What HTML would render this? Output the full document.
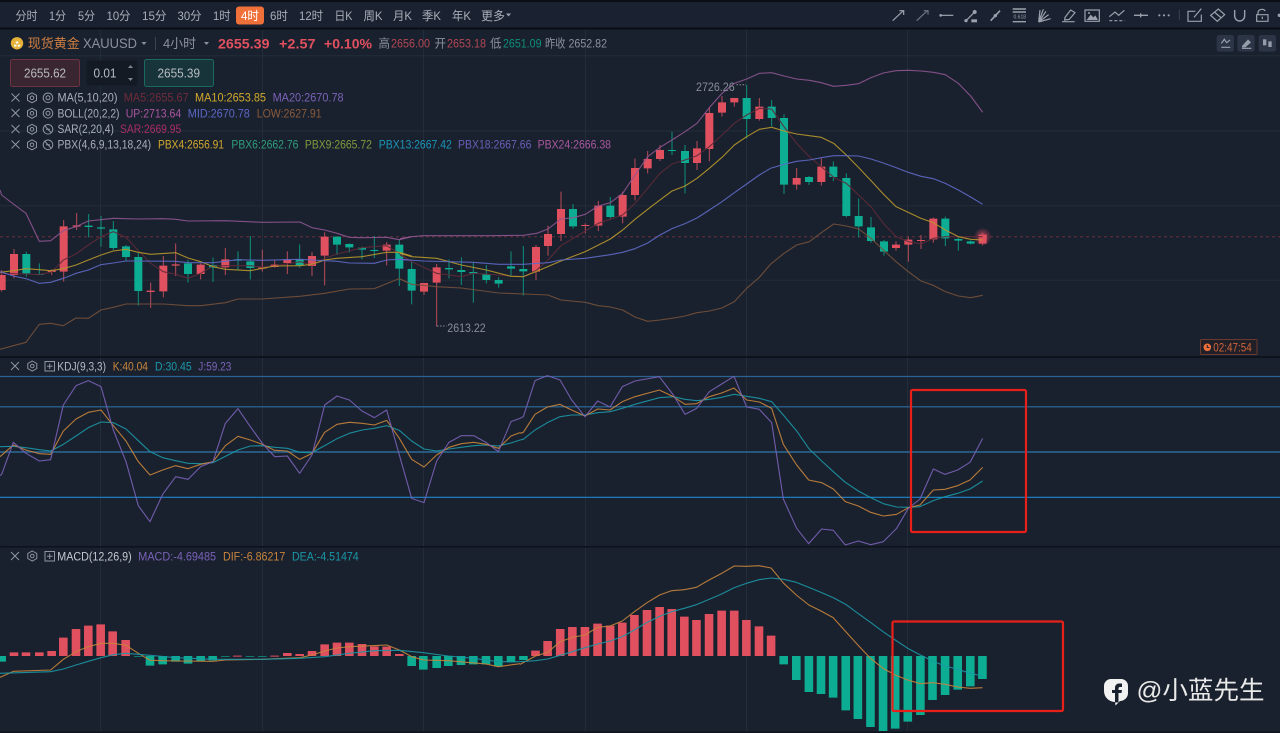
<!DOCTYPE html>
<html lang="zh"><head><meta charset="utf-8"><title>XAUUSD</title>
<style>
html,body{margin:0;padding:0;background:#1a212e;width:1280px;height:733px;overflow:hidden}
svg{display:block;font-family:"Liberation Sans","Noto Sans CJK SC",sans-serif;font-size:12px;filter:blur(.3px)}
.z *{vector-effect:non-scaling-stroke}
.l{fill:none;stroke-linejoin:round;stroke-width:1.1;opacity:.9}
.w{fill:none;stroke-width:1}
.b{fill:none;stroke-width:8}
.m{fill:none;stroke-width:8.6}
.i{fill:none;stroke:#9aa1ad;stroke-width:1.2}
.h{fill:none;stroke:#8f96a2;stroke-width:1}
text{white-space:pre}
.t text{fill:#a9afb9;font-size:12px}
</style></head><body>
<svg width="1280" height="733" viewBox="0 0 1280 733" xmlns="http://www.w3.org/2000/svg">
<defs><radialGradient id="gl"><stop offset="0" stop-color="#f0506a" stop-opacity=".75"/><stop offset="1" stop-color="#f0506a" stop-opacity="0"/></radialGradient></defs>
<rect width="1280" height="733" fill="#1a212e"/>

<!-- grid -->
<path d="M0 55.7H1280M0 131H1280M0 205.7H1280M0 280.3H1280" stroke="#222d39" stroke-width="1"/>
<path d="M100.5 30V356M262.5 30V356M423.5 30V356M585.5 30V356M746.5 30V356M907.5 30V356M100.5 358V546M262.5 358V546M423.5 358V546M585.5 358V546M746.5 358V546M907.5 358V546M100.5 548V731M262.5 548V731M423.5 548V731M585.5 548V731M746.5 548V731M907.5 548V731" stroke="#222d39" stroke-width="1"/>

<!-- top toolbar -->
<rect width="1280" height="2" fill="#0b0e14"/>
<rect y="2" width="1280" height="25.5" fill="#1a2231"/>
<rect y="27.5" width="1280" height="2" fill="#0a0d13"/>
<rect x="236" y="6.5" width="28" height="18" rx="3" fill="#f0703a"/>
<g class="t">
<text x="15.5" y="20" textLength="22" lengthAdjust="spacingAndGlyphs">分时</text>
<text x="49" y="20" textLength="17" lengthAdjust="spacingAndGlyphs">1分</text>
<text x="78" y="20" textLength="17" lengthAdjust="spacingAndGlyphs">5分</text>
<text x="106.5" y="20" textLength="24" lengthAdjust="spacingAndGlyphs">10分</text>
<text x="142" y="20" textLength="24.5" lengthAdjust="spacingAndGlyphs">15分</text>
<text x="177.5" y="20" textLength="24" lengthAdjust="spacingAndGlyphs">30分</text>
<text x="213" y="20" textLength="17.5" lengthAdjust="spacingAndGlyphs">1时</text>
<text x="241" y="20" textLength="18" lengthAdjust="spacingAndGlyphs" style="fill:#fff">4时</text>
<text x="270" y="20" textLength="18" lengthAdjust="spacingAndGlyphs">6时</text>
<text x="299" y="20" textLength="24" lengthAdjust="spacingAndGlyphs">12时</text>
<text x="334.5" y="20" textLength="18" lengthAdjust="spacingAndGlyphs">日K</text>
<text x="363.5" y="20" textLength="19" lengthAdjust="spacingAndGlyphs">周K</text>
<text x="393" y="20" textLength="19" lengthAdjust="spacingAndGlyphs">月K</text>
<text x="422" y="20" textLength="19" lengthAdjust="spacingAndGlyphs">季K</text>
<text x="452" y="20" textLength="19" lengthAdjust="spacingAndGlyphs">年K</text>
<text x="481" y="20" textLength="24" lengthAdjust="spacingAndGlyphs">更多</text>
</g>
<path d="M506 13.5h5l-2.500 3z" fill="#9aa1ad"/>

<!-- drawing tool icons -->
<g class="z" transform="translate(880,0) scale(.33333)">
<path class="i" d="M38 62L70 32M58 32H71V45"/>
<path class="i" style="stroke:#6d7583" d="M110 62L142 32M131 32H144V44"/>
<path class="i" d="M180 46H220"/><circle cx="182" cy="46" r="4" fill="#9aa1ad"/>
<path class="i" d="M258 62L286 34"/><circle cx="258" cy="62" r="5" fill="#9aa1ad"/><circle cx="284" cy="36" r="6" fill="#9aa1ad"/><rect x="274" y="58" width="17" height="9" fill="#9aa1ad"/>
<path class="i" style="stroke-width:1.6" d="M332 62L360 32"/><circle cx="346" cy="47" r="5" fill="#9aa1ad"/>
<path class="i" style="stroke-width:1.4" d="M398 27H438M398 36H438M398 65H438"/>
<path class="i" d="M476 66L490 28M476 66L498 34M476 66L506 44M476 66L512 56M476 66L480 30"/>
<path class="i" d="M555 52L572 30L585 38L568 58L554 60ZM546 65H584"/>
<rect x="615" y="30" width="43" height="34" class="i"/><path d="M620 60L632 44L640 52L646 46L654 60Z" fill="#9aa1ad"/><circle cx="627" cy="39" r="3" fill="#9aa1ad"/>
<path class="i" d="M688 50L705 36L716 46L733 31"/><path class="i" style="stroke-dasharray:3 2" d="M688 62H734"/>
<path class="i" style="stroke-width:1.4" d="M762 46H804M782 40V52"/>
<circle cx="838" cy="46" r="3.200" fill="#9aa1ad"/><circle cx="852" cy="46" r="3.200" fill="#9aa1ad"/><circle cx="866" cy="46" r="3.200" fill="#9aa1ad"/>
<path d="M898 30V60" style="stroke:#3a4352;stroke-width:1;fill:none"/>
<path class="i" d="M946 34H924V64H964V44M942 52L964 26"/>
<path class="i" d="M992 46L1015 27L1034 44L1012 64ZM1003 36L1024 54"/>
<path class="i" style="stroke-width:1.4" d="M1064 30V48A15 15 0 0 0 1094 48V30"/>
<rect x="1130" y="44" width="34" height="20" class="i"/><path class="i" d="M1134 44V38A12 11 0 0 1 1156 33M1147 50V57"/>
<circle cx="1198" cy="46" r="5" fill="#9aa1ad"/>
</g>
<text x="1013.500" y="18.300" font-size="5" fill="#9aa1ad" textLength="12.500" lengthAdjust="spacingAndGlyphs">0.618</text>

<!-- info row -->
<circle cx="17" cy="43.300" r="6.200" fill="#e6b23a"/>
<path d="M14 46.500h2.500v-1.800H14zM17.700 46.500h2.500v-1.800h-2.500zM15.800 43.500h2.500v-2h-2.500z" fill="#fff"/>
<text x="27.800" y="48" font-size="13" fill="#cf7f42" textLength="52" lengthAdjust="spacingAndGlyphs">现货黄金</text>
<text x="83" y="48" font-size="13.500" fill="#8b919c" textLength="54" lengthAdjust="spacingAndGlyphs">XAUUSD</text>
<path d="M141.500 42h5l-2.500 3z" fill="#8b919c"/>
<path d="M155.500 37V50" stroke="#3a4352"/>
<text x="163" y="48" font-size="13" fill="#8b919c" textLength="33" lengthAdjust="spacingAndGlyphs">4小时</text>
<path d="M204 42h5l-2.500 3z" fill="#8b919c"/>
<g font-weight="700" font-size="14" fill="#e0505f">
<text x="218" y="48.500" textLength="51.500" lengthAdjust="spacingAndGlyphs">2655.39</text>
<text x="279" y="48.500" textLength="36.500" lengthAdjust="spacingAndGlyphs">+2.57</text>
<text x="324" y="48.500" textLength="48" lengthAdjust="spacingAndGlyphs">+0.10%</text>
</g>
<g font-size="12" fill="#8b919c">
<text x="378.500" y="47.700" textLength="11.500" lengthAdjust="spacingAndGlyphs">高</text>
<text x="391" y="47.700" textLength="39" lengthAdjust="spacingAndGlyphs" fill="#b34755">2656.00</text>
<text x="434.500" y="47.700" textLength="11.500" lengthAdjust="spacingAndGlyphs">开</text>
<text x="447" y="47.700" textLength="39" lengthAdjust="spacingAndGlyphs" fill="#b34755">2653.18</text>
<text x="490" y="47.700" textLength="11.500" lengthAdjust="spacingAndGlyphs">低</text>
<text x="503" y="47.700" textLength="38.500" lengthAdjust="spacingAndGlyphs" fill="#0e8f7a">2651.09</text>
<text x="545" y="47.700" textLength="20.500" lengthAdjust="spacingAndGlyphs">昨收</text>
<text x="568.500" y="47.700" textLength="38.500" lengthAdjust="spacingAndGlyphs">2652.82</text>
</g>

<!-- right mini buttons -->
<g transform="translate(880,0) scale(.33333)" class="z">
<rect x="1010" y="105" width="52" height="50" rx="7" fill="#2b3546"/>
<rect x="1072" y="105" width="52" height="50" rx="7" fill="#2b3546"/>
<rect x="1136" y="105" width="52" height="50" rx="7" fill="#2b3546"/>
<path class="i" d="M1024 130L1033 118L1040 128L1050 120M1024 142H1051"/>
<path d="M1086 138L1104 118L1113 127L1096 142L1086 142Z" fill="#959dab"/><path class="i" d="M1086 145H1114"/>
<rect x="1149" y="118" width="10" height="18" fill="#959dab"/><rect x="1165" y="124" width="10" height="17" fill="#959dab"/>
</g>

<!-- order boxes -->
<rect x="10.500" y="59.500" width="69" height="27" rx="2" fill="#392630" stroke="#6d3340"/>
<text x="24" y="77.300" font-size="12.500" fill="#b9bcc3" textLength="42" lengthAdjust="spacingAndGlyphs">2655.62</text>
<rect x="86.500" y="60.500" width="51" height="25" rx="2" fill="#131a24"/>
<text x="93.500" y="77.300" font-size="12.500" fill="#b9bcc3" textLength="23" lengthAdjust="spacingAndGlyphs">0.01</text>
<path d="M128 68l2.500-3 2.500 3zM128 78l2.500 3 2.500-3z" fill="#7d8592"/>
<rect x="144.500" y="59.500" width="69" height="27" rx="2" fill="#17343a" stroke="#1b6a5e"/>
<text x="157.500" y="77.300" font-size="12.500" fill="#b9bcc3" textLength="42.500" lengthAdjust="spacingAndGlyphs">2655.39</text>

<!-- price dashed line -->
<path d="M0 236.700H1280" stroke="#6a2f3c" stroke-width="1" stroke-dasharray="3 3"/>

<!-- candles zoom3 region -->
<g class="z" transform="translate(0,180) scale(.33333)">
<path class="w" stroke="#b84a59" d="M5 270V335M42 207V295M155 268V285M191 120V305M230 99V150M452 308V384M490 228V352M527 190V288M602 250V298M676 204V285M787 209V275M824 240V263M862 214V282M936 216V288M974 157V316M1160 186V256"/>
<path class="w" stroke="#0d8f7c" d="M79 215V290M118 250V285M266 102V172M303 108V200M340 123V210M378 195V243M415 218V377M564 240V308M639 233V306M714 214V270M751 168V298M899 193V263M1011 170V225M1048 190V217M1086 200V238M1123 168V234M1198 178V318"/>
<path class="b" stroke="#e0505f" d="M5 285V330M42 222V285M155 272V276M191 139V275M230 136V140M452 332V336M490 257V334M527 253V257M602 254V282M676 238V262M787 262V266M824 254V261M862 238V249M936 228V258M974 170V227M1160 194V212"/>
<path class="b" stroke="#0cad93" d="M79 222V280M118 282V285M266 137V141M303 142V146M340 148V204M378 199V231M415 231V333M564 250V282M639 255V263M714 238V242M751 244V264M899 238V256M1011 170V194M1048 192V202M1086 203V209M1123 210V213M1198 194V266"/>
<!-- lines -->
<polyline class="l" stroke="#5f2a38" points="0,280 80,282 118,284 155,276 190,240 228,222 265,195 303,170 340,155 378,172 415,212 452,250 490,275 527,283 564,295 602,280 639,258 676,257 751,257 787,262 824,258 900,245 936,255 974,235 1011,222 1086,203 1160,197 1198,220 1235,245"/>
<polyline class="l" stroke="#b8982c" points="0,277 40,272 78,266 118,269 152,272 190,266 228,255 265,240 303,225 340,213 378,208 415,217 452,223 527,218 564,234 602,245 639,260 676,268 751,272 787,265 824,258 899,257 936,253 974,240 1011,235 1086,230 1160,217 1198,217 1235,228"/>
<polyline class="l" stroke="#8f5692" points="0,30 5,45 40,72 78,100 118,184 152,182 190,152 228,140 265,123 303,119 340,115 378,116 415,117 490,116 527,118 564,123 676,122 787,127 900,126 936,143 974,150 1011,160 1048,172 1086,173 1160,172 1198,179 1235,170"/>
<polyline class="l" stroke="#5f6bc8" points="0,275 40,288 78,296 118,310 152,307 190,295 228,280 265,270 303,254 340,249 378,243 415,243 527,244 564,248 639,248 676,244 714,239 787,241 899,238 936,240 1011,244 1048,249 1123,250 1160,240 1198,238 1235,241"/>
<polyline class="l" stroke="#75513b" points="0,508 40,497 78,487 118,433 152,430 190,437 228,414 265,415 303,390 340,382 378,372 415,372 490,372 564,377 602,377 676,368 714,357 787,357 899,349 974,340 1048,327 1123,326 1160,311 1198,296 1235,313"/>
</g>

<!-- candles zoom4 region -->
<g class="z" transform="translate(400,60) scale(.33333)">
<path class="w" stroke="#b84a59" d="M72 669V705M110 612V800M408 555V660M444 497V587M483 395V543M556 490V520M595 423V513M668 395V490M705 296V421M743 273V340M780 255V303M891 243V330M928 143V304M966 108V170M1003 114V140M1078 114V182M1190 324V389M1264 295V377"/>
<path class="w" stroke="#0d8f7c" d="M35 603V733M147 598V655M184 592V675M220 608V728M259 615V670M296 652V683M333 574V648M370 558V707M519 432V506M631 411V475M816 215V285M855 255V400M1040 75V235M1115 120V200M1152 163V402M1227 348V375M1300 304V363"/>
<path class="b" stroke="#e0505f" d="M72 669V695M110 622V668M408 561V635M444 522V558M483 447V522M556 495V498M595 437V497M668 405V470M705 324V405M743 297V325M780 270V297M891 265V309M928 159V267M966 127V158M1003 114V127M1078 140V177M1190 354V374M1264 320V366"/>
<path class="b" stroke="#0cad93" d="M35 627V692M147 624V628M184 630V636M220 636V640M259 643V660M296 660V671M333 619V626M370 627V634M519 447V499M631 437V471M816 270V273M855 273V309M1040 114V177M1115 140V174M1152 174V374M1227 351V366M1300 320V351"/>
<polyline class="l" stroke="#5f2a38" points="0,585 35,605 110,640 184,650 220,640 296,645 333,648 370,650 408,632 444,600 483,557 556,513 595,490 668,465 705,430 743,385 780,340 816,312 855,300 891,287 928,260 966,225 1003,190 1040,165 1078,145 1115,147"/>
<polyline class="l" stroke="#b8982c" points="0,580 35,590 110,595 184,615 259,630 333,649 370,650 408,635 483,603 556,575 631,537 668,510 705,478 743,448 780,420 816,393 855,378 891,355 928,325 966,292 1003,255 1040,230 1078,208 1115,202"/>
<polyline class="l" stroke="#8f5692" points="0,536 35,530 70,527 260,527 370,526 410,520 444,507 483,477 520,473 556,463 595,438 631,428 668,400 705,345 743,290 780,262 816,240 855,215 891,190 928,143 966,100 1003,70 1040,57 1078,40 1115,38"/>
<polyline class="l" stroke="#5f6bc8" points="0,598 70,603 220,607 296,613 370,613 444,608 483,600 556,595 631,584 668,577 705,566 743,549 780,525 816,506 855,491 891,474 928,450 966,425 1003,398 1040,372 1078,345 1115,323"/>
<polyline class="l" stroke="#75513b" points="0,657 35,673 110,680 184,684 296,699 370,702 444,705 483,720 556,727 595,737 631,741 668,750 705,771 743,784 780,780 816,775 855,768 891,758 928,753 966,744 1003,725 1040,685 1078,652 1115,609"/>
</g>

<!-- candles zoom5 region -->
<circle cx="982.700" cy="236.700" r="9" fill="url(#gl)"/>
<g class="z" transform="translate(760,60) scale(.33333)">
<path class="w" stroke="#b84a59" d="M408 544V572M445 530V605M483 525V567M520 473V548M668 518V556"/>
<path class="w" stroke="#0d8f7c" d="M259 340V472M296 416V532M333 471V548M372 540V587M556 470V558M595 530V572M632 541V553"/>
<path class="b" stroke="#e0505f" d="M408 554V564M445 539V554M483 540V543M520 476V538M668 524V551"/>
<path class="b" stroke="#0cad93" d="M259 354V468M296 468V499M333 502V543M372 544V575M556 476V535M595 537V542M632 544V551"/>
<polyline class="l" stroke="#5f2a38" points="35,147 72,200 110,250 148,290 184,320 221,352 259,370 296,405 333,440 370,490 408,530 445,545 483,552 520,535 556,530 595,530 632,530 668,530"/>
<polyline class="l" stroke="#b8982c" points="35,202 72,213 110,222 148,227 184,232 221,250 259,285 296,323 333,362 370,402 408,440 445,457 483,475 520,488 556,510 595,530 632,538 668,540"/>
<polyline class="l" stroke="#8f5692" points="35,38 72,48 110,57 148,61 184,68 221,79 259,76 296,71 333,53 370,39 408,32 445,31 483,33 520,37 556,44 595,70 632,108 668,157"/>
<polyline class="l" stroke="#5f6bc8" points="35,324 72,313 110,304 148,300 184,293 221,287 259,287 296,288 333,297 370,309 408,323 445,337 483,349 520,356 556,370 595,390 632,411 668,433"/>
<polyline class="l" stroke="#75513b" points="35,610 72,580 110,555 148,545 184,518 221,492 259,498 296,507 333,535 370,570 408,605 445,635 483,663 520,676 556,695 595,708 632,713 668,706"/>
</g>

<!-- high/low labels -->
<text x="696" y="91" font-size="12" fill="#878d98" textLength="38.700" lengthAdjust="spacingAndGlyphs">2726.26</text>
<path d="M736.500 84.700H746" stroke="#878d98" stroke-dasharray="1.500 1.500"/>
<text x="447.300" y="332" font-size="12" fill="#878d98" textLength="38.400" lengthAdjust="spacingAndGlyphs">2613.22</text>
<path d="M437 326H446.500" stroke="#878d98" stroke-dasharray="1.500 1.500"/>

<!-- indicator legends -->
<g font-size="12.200">
<text x="57.500" y="101.700" fill="#a9afb9" textLength="60" lengthAdjust="spacingAndGlyphs">MA(5,10,20)</text>
<text x="123.700" y="101.700" fill="#6f2b3a" textLength="65" lengthAdjust="spacingAndGlyphs">MA5:2655.67</text>
<text x="195" y="101.700" fill="#d2a92c" textLength="71" lengthAdjust="spacingAndGlyphs">MA10:2653.85</text>
<text x="272.600" y="101.700" fill="#7a62b8" textLength="71" lengthAdjust="spacingAndGlyphs">MA20:2670.78</text>
<text x="57.500" y="117.300" fill="#a9afb9" textLength="62" lengthAdjust="spacingAndGlyphs">BOLL(20,2,2)</text>
<text x="125.700" y="117.300" fill="#a9569f" textLength="55.500" lengthAdjust="spacingAndGlyphs">UP:2713.64</text>
<text x="187.800" y="117.300" fill="#5a67c8" textLength="62" lengthAdjust="spacingAndGlyphs">MID:2670.78</text>
<text x="256.700" y="117.300" fill="#8a5a3a" textLength="65" lengthAdjust="spacingAndGlyphs">LOW:2627.91</text>
<text x="57.500" y="133.200" fill="#a9afb9" textLength="56.400" lengthAdjust="spacingAndGlyphs">SAR(2,20,4)</text>
<text x="120" y="133.200" fill="#a82c6a" textLength="61.200" lengthAdjust="spacingAndGlyphs">SAR:2669.95</text>
<text x="57.500" y="148.500" fill="#a9afb9" textLength="93.500" lengthAdjust="spacingAndGlyphs">PBX(4,6,9,13,18,24)</text>
<text x="158" y="148.500" fill="#d2a92c" textLength="66" lengthAdjust="spacingAndGlyphs">PBX4:2656.91</text>
<text x="231.400" y="148.500" fill="#2f9e7a" textLength="67" lengthAdjust="spacingAndGlyphs">PBX6:2662.76</text>
<text x="304.900" y="148.500" fill="#7f9a3e" textLength="67" lengthAdjust="spacingAndGlyphs">PBX9:2665.72</text>
<text x="378.800" y="148.500" fill="#1b96b8" textLength="73" lengthAdjust="spacingAndGlyphs">PBX13:2667.42</text>
<text x="458" y="148.500" fill="#6a5fb8" textLength="73.400" lengthAdjust="spacingAndGlyphs">PBX18:2667.66</text>
<text x="537.600" y="148.500" fill="#a858a0" textLength="73.400" lengthAdjust="spacingAndGlyphs">PBX24:2666.38</text>
</g>
<!-- legend icons -->
<g class="h">
<path d="M11.500 93.500l8 8m0-8l-8 8M11.500 109l8 8m0-8l-8 8M11.500 125l8 8m0-8l-8 8M11.500 140.500l8 8m0-8l-8 8"/>
<path d="M32 92.800l4.500 2.500v5l-4.500 2.500-4.500-2.500v-5zM32 108.300l4.500 2.500v5l-4.500 2.500-4.500-2.500v-5zM32 124.300l4.500 2.500v5l-4.500 2.500-4.500-2.500v-5zM32 139.800l4.500 2.500v5l-4.500 2.500-4.500-2.500v-5z"/>
<circle cx="32" cy="97.800" r="1.800"/><circle cx="32" cy="113.300" r="1.800"/><circle cx="32" cy="129.300" r="1.800"/><circle cx="32" cy="144.800" r="1.800"/>
<circle cx="48" cy="97.800" r="4.800"/><circle cx="48" cy="97.800" r="2"/>
<circle cx="48" cy="113.300" r="4.800"/><circle cx="48" cy="113.300" r="2"/>
<circle cx="48" cy="129.300" r="4.800"/><path d="M44.500 125.500l7 7.500M46 129.300h4"/>
<circle cx="48" cy="144.800" r="4.800"/><path d="M44.500 141l7 7.500M46 144.800h4"/>
</g>

<!-- timer -->
<rect x="1200.500" y="339.500" width="56.500" height="15" rx="1" fill="#211f27" stroke="#6b3a2f"/>
<circle cx="1207.300" cy="347.300" r="3.800" fill="#ee6f3c"/><path d="M1207.300 345v2.500h2" stroke="#211f27" fill="none"/>
<text x="1213.300" y="351.500" font-size="12" fill="#d0663a" textLength="38.400" lengthAdjust="spacingAndGlyphs">02:47:54</text>

<!-- pane separators -->
<rect y="356" width="1280" height="2" fill="#0e121a"/>
<rect y="546" width="1280" height="1.500" fill="#0e121a"/>
<rect y="731.500" width="1280" height="1.500" fill="#0e121a"/>

<!-- KDJ pane -->
<g stroke-width="1.200" fill="none">
<path d="M0 376.500H1280" stroke="#2a6393"/>
<path d="M0 406.800H1280" stroke="#2b6e9f"/>
<path d="M0 452H1280" stroke="#2a6a98" stroke-width="1.400"/>
<path d="M0 497.300H1280" stroke="#1d86cc"/>
</g>
<g class="z" transform="translate(0,355) scale(.33333)">
<polyline class="l" stroke="#1a98a8" points="0,275 40,274 78,278 118,284 152,288 190,268 228,243 265,218 303,201 340,203 378,222 415,257 450,290 488,308 527,317 564,325 602,326 639,323 676,304 714,285 751,273 787,272 824,277 862,280 899,292 936,293 974,272 1011,251 1048,235 1086,225 1123,220 1160,212 1198,226 1235,258 1272,282 1310,288 1347,282 1384,277 1421,272 1458,270 1495,273 1533,264 1560,255"/>
<polyline class="l" stroke="#c8853c" points="0,305 40,270 78,285 118,296 152,298 190,228 228,192 265,172 303,165 340,212 378,258 415,320 450,360 488,345 527,332 564,341 602,328 639,320 676,272 714,244 751,255 787,268 824,286 862,288 899,313 936,295 974,232 1011,208 1048,202 1086,205 1123,210 1160,196 1198,250 1235,313 1272,336 1310,300 1347,277 1384,266 1421,262 1458,268 1495,280 1533,243 1560,233"/>
<polyline class="l" stroke="#7a62b8" points="0,362 5,358 40,262 78,295 118,318 152,314 190,150 228,92 265,77 303,95 340,225 378,320 415,452 450,500 488,418 527,365 564,373 602,335 639,320 676,205 714,161 751,215 787,265 824,305 862,303 899,355 936,300 974,150 1011,123 1048,135 1086,168 1123,188 1160,165 1198,300 1235,430 1272,443 1310,318 1347,262 1384,242 1421,242 1458,262 1495,290 1533,200 1560,190"/>
</g>
<g class="z" transform="translate(520,355) scale(.33333)">
<polyline class="l" stroke="#1a98a8" points="0,255 10,253 45,225 82,203 120,185 155,180 195,180 233,173 270,170 307,160 345,148 418,128 460,125 495,133 530,137 568,133 605,127 642,118 680,124 718,130 755,140 790,180 830,228 866,280 905,318 940,350 976,382 1015,408 1052,428 1090,446 1130,456 1165,457 1200,455 1240,437 1275,425 1313,415 1350,402 1388,378"/>
<polyline class="l" stroke="#c8853c" points="0,235 10,232 45,178 82,156 120,148 155,165 195,183 233,162 270,165 307,140 345,125 418,105 460,125 495,148 530,146 568,125 605,114 642,99 680,135 718,141 755,160 790,268 830,330 866,375 905,383 940,402 976,440 1015,453 1052,472 1090,483 1130,478 1165,458 1200,450 1240,405 1275,403 1313,392 1350,375 1388,337"/>
<polyline class="l" stroke="#7a62b8" points="0,190 10,185 45,77 82,62 120,75 155,135 195,185 233,138 270,156 307,95 345,78 418,65 460,120 495,178 530,160 568,110 605,87 642,64 680,156 718,163 755,203 790,432 830,520 866,566 905,522 940,526 976,570 1015,558 1052,569 1090,560 1130,520 1165,460 1200,432 1240,342 1275,358 1313,345 1350,322 1388,250"/>
</g>
<rect x="911" y="390" width="115" height="142" rx="1.500" fill="none" stroke="#e8201a" stroke-width="2.200"/>
<g class="h">
<path d="M11 362l8 8m0-8l-8 8"/>
<path d="M32.300 361l4.500 2.500v5l-4.500 2.500-4.500-2.500v-5z"/><circle cx="32.300" cy="366" r="1.800"/>
<rect x="45" y="361.500" width="9.500" height="9.500"/><path d="M49.700 363.500v5.500M47 366.200h5.500"/>
</g>
<g font-size="12.200">
<text x="57.300" y="370.700" fill="#b4bac3" textLength="48.700" lengthAdjust="spacingAndGlyphs">KDJ(9,3,3)</text>
<text x="112.700" y="370.700" fill="#c8853c" textLength="35.300" lengthAdjust="spacingAndGlyphs">K:40.04</text>
<text x="155" y="370.700" fill="#1a98a8" textLength="36.700" lengthAdjust="spacingAndGlyphs">D:30.45</text>
<text x="198.300" y="370.700" fill="#7a62b8" textLength="33" lengthAdjust="spacingAndGlyphs">J:59.23</text>
</g>

<!-- MACD pane -->
<g class="h">
<path d="M11 552l8 8m0-8l-8 8"/>
<path d="M32.300 551l4.500 2.500v5l-4.500 2.500-4.500-2.500v-5z"/><circle cx="32.300" cy="556" r="1.800"/>
<rect x="45" y="551.500" width="9.500" height="9.500"/><path d="M49.700 553.500v5.500M47 556.200h5.500"/>
</g>
<g font-size="12.200">
<text x="57.300" y="560.700" fill="#c4c9d0" textLength="74.400" lengthAdjust="spacingAndGlyphs">MACD(12,26,9)</text>
<text x="138.300" y="560.700" fill="#7a62b8" textLength="77.700" lengthAdjust="spacingAndGlyphs">MACD:-4.69485</text>
<text x="223" y="560.700" fill="#c8853c" textLength="62.300" lengthAdjust="spacingAndGlyphs">DIF:-6.86217</text>
<text x="292" y="560.700" fill="#1a98a8" textLength="66.700" lengthAdjust="spacingAndGlyphs">DEA:-4.51474</text>
</g>
<g class="z" transform="translate(0,545) scale(.33333)">
<path class="m" stroke="#e0505f" d="M42 322V333M78 322V333M118 322V333M155 318V333M190 278V333M228 252V333M265 242V333M302 238V333M338 259V333M377 285V333M712 332V335M824 332V335M862 324V333M899 327V333M936 318V333M974 298V333M1011 293V333M1048 293V333M1086 297V333M1123 304V333M1160 305V333M1198 327V333"/>
<path class="m" stroke="#0cad93" d="M5 333V350M415 333V335M450 333V362M488 333V358M527 333V350M564 333V356M602 333V348M638 333V346M676 333V335M750 333V335M787 333V335M1235 333V363M1270 333V374M1310 333V369M1345 333V363M1383 333V360M1420 333V358M1458 333V358M1495 333V365M1533 333V352"/>
<polyline class="l" stroke="#c8853c" points="0,397 40,379 152,375 190,343 228,320 265,305 303,295 340,295 378,301 415,325 450,346 527,348 639,349 676,345 787,343 900,338 936,330 974,318 1011,309 1048,305 1160,300 1198,315 1235,335 1270,345 1345,347 1458,357 1495,365 1560,356"/>
<polyline class="l" stroke="#1a98a8" points="0,385 152,380 190,372 228,360 265,349 303,338 340,329 378,325 450,331 527,338 639,343 787,343 900,340 974,335 1048,325 1123,317 1198,316 1270,323 1345,333 1420,340 1495,350 1560,350"/>
</g>
<g class="z" transform="translate(520,545) scale(.48473,.33333)">
<path class="m" stroke="#e0505f" d="M32 317V333M57 288V333M83 252V333M108 246V333M134 246V333M160 236V333M186 242V333M211 233V333M236 210V333M262 195V333M288 186V333M313 192V333M339 215V333M364 225V333M390 207V333M416 197V333M442 197V333M467 225V333M493 244V333M518 272V333"/>
<path class="m" stroke="#0cad93" d="M7 333V345M544 333V358M570 333V405M596 333V441M621 333V447M646 333V458M672 333V496M697 333V522M723 333V546M749 333V558M774 333V551M800 333V530M826 333V510M851 333V465M877 333V450M903 333V434M929 333V424M954 333V402"/>
<polyline class="l" stroke="#c8853c" points="0,358 32,333 57,322 83,290 108,277 134,270 160,247 186,243 211,228 236,200 262,173 288,150 313,137 339,134 364,127 390,105 416,85 442,63 467,64 493,62 518,69 544,115 570,150 596,180 621,198 646,218 672,260 697,300 723,340 749,370 774,390 800,405 826,416 851,413 877,418 903,426 929,430 954,428"/>
<polyline class="l" stroke="#1a98a8" points="0,350 32,347 57,342 83,331 108,320 134,308 160,297 186,288 211,275 236,255 262,232 288,214 313,200 339,190 364,179 390,163 416,147 442,128 467,115 493,104 518,99 544,103 570,112 596,127 621,142 646,158 672,178 697,205 723,232 749,260 774,285 800,310 826,330 851,348 877,363 903,373 929,385 954,393"/>
</g>
<rect x="892.500" y="621.500" width="170.500" height="89.500" rx="1.500" fill="none" stroke="#e8201a" stroke-width="2.200"/>

<!-- watermark -->
<path d="M1111 679H1121A7 7 0 0 1 1128 686V693A8 8 0 0 1 1120 701L1115.500 705.500L1115 702A11 11 0 0 1 1104 691V686A7 7 0 0 1 1111 679Z" fill="#f2f2f2"/>
<path d="M1122 683.500H1119A4 4 0 0 0 1115 687.500V690H1112V693H1115V702.500H1118.500V693H1121.500L1122 690H1118.500V688.500A1.500 1.500 0 0 1 1120 687H1122Z" fill="#1a212e"/>
<text x="1136.500" y="699" font-size="25" fill="#e9e9e9" textLength="128" lengthAdjust="spacingAndGlyphs">@小蓝先生</text>
</svg>
</body></html>
